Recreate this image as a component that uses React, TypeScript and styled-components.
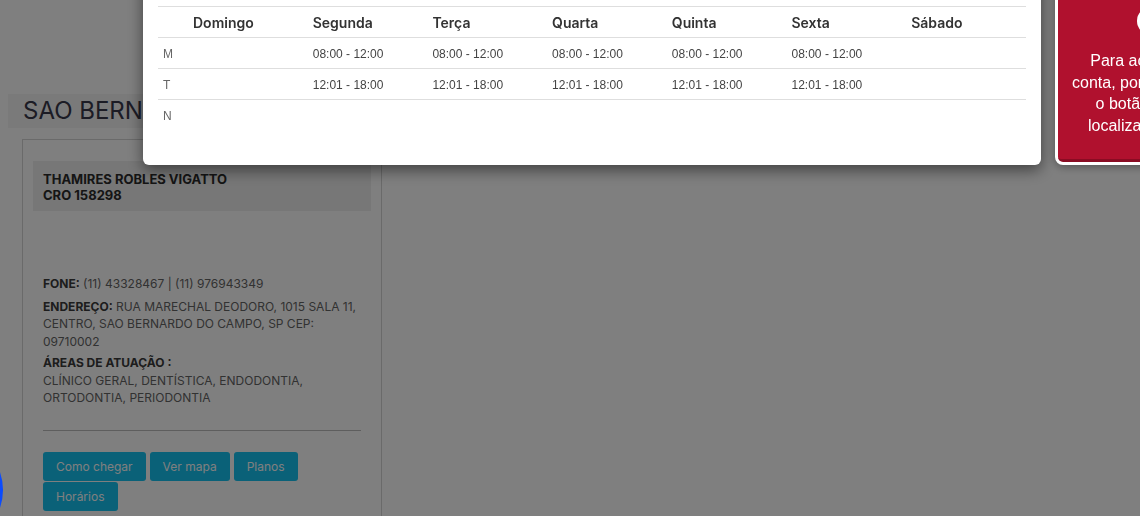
import React from 'react';
import styled, { createGlobalStyle } from 'styled-components';

const GlobalStyle = createGlobalStyle`
  html, body { margin: 0; padding: 0; background: #ffffff; }
  body {
    font-family: Inter, "Noto Sans", sans-serif;
    width: 1140px;
    height: 516px;
    overflow: hidden;
  }
  * { box-sizing: border-box; }
`;

const Page = styled.main`
  padding: 94px 0 0 8px;
`;

const Column = styled.section`
  width: 374px;
`;

const CityBar = styled.h2`
  margin: 0;
  height: 34px;
  padding: 0 15px;
  background: #f4f4f4;
  color: #38384a;
  font-size: 24px;
  font-weight: 400;
  line-height: 34px;
  white-space: nowrap;
  overflow: hidden;
`;

const Card = styled.article`
  margin: 11px 0 0 14px;
  width: 360px;
  height: 400px;
  padding: 21px 10px 0;
  border: 1px solid #d4d4d4;
  border-bottom: none;
`;

const NameBox = styled.div`
  background: #eeeeee;
  padding: 10px 10px 8px;
  color: #2a2a2a;
  font-size: 13px;
  font-weight: 700;
  line-height: 16px;
`;

const Info = styled.div`
  margin-top: 64px;
  padding: 0 10px;
  color: #646464;
  font-size: 12px;
  line-height: 17.5px;
`;

const Para = styled.p<{ $gap?: number }>`
  margin: 0 0 ${(p) => p.$gap ?? 5}px;
`;

const Label = styled.strong`
  color: #3a3a3a;
  font-weight: 700;
`;

const Rule = styled.hr`
  margin: 23px 10px 0;
  border: none;
  border-top: 1px solid #bcbcbc;
`;

const ButtonRow = styled.div`
  display: flex;
  flex-wrap: wrap;
  column-gap: 4px;
  row-gap: 1px;
  margin: 21px 10px 0;
  width: 260px;
`;

const ActionButton = styled.button`
  height: 29px;
  padding: 0 13px;
  border: none;
  border-radius: 3px;
  background: #14c2f0;
  color: #ffffff;
  font-family: Inter, "Noto Sans", sans-serif;
  font-size: 12px;
  cursor: pointer;
`;

const Overlay = styled.div`
  position: fixed;
  inset: 0;
  background: rgba(0, 0, 0, 0.5);
`;

const Modal = styled.div`
  position: fixed;
  left: 143px;
  top: -65px;
  width: 898px;
  background: #ffffff;
  border-radius: 6px;
  box-shadow: 0 5px 15px rgba(0, 0, 0, 0.5);
`;

const ModalHeader = styled.header`
  height: 56px;
  padding: 0 15px;
  display: flex;
  align-items: center;
  border-bottom: 1px solid #e5e5e5;
  font-size: 18px;
  color: #333;
`;

const ModalBody = styled.div`
  padding: 15px;
`;

const Table = styled.table`
  width: 100%;
  border-collapse: collapse;
  table-layout: fixed;
  margin-bottom: 19px;
`;

const Th = styled.th`
  height: 31px;
  padding: 0 5px;
  border-top: 1px solid #dedede;
  border-bottom: 1px solid #dedede;
  text-align: left;
  color: #333333;
  font-family: Inter, "Noto Sans", sans-serif;
  font-size: 14px;
  font-weight: 600;
`;

const Td = styled.td<{ $first?: boolean }>`
  height: 31px;
  padding: 1px 5px 0;
  border-top: 1px solid #dedede;
  color: ${(p) => (p.$first ? '#666666' : '#444444')};
  font-family: "Liberation Sans", Arial, sans-serif;
  font-size: 12px;
`;

const AlertPanel = styled.aside`
  position: fixed;
  left: 1055px;
  top: -20px;
  width: 195px;
  border: 3px solid #ffffff;
  border-radius: 8px;
  background: #ffffff;
  box-shadow: 0 2px 8px rgba(0, 0, 0, 0.35);
`;

const AlertInner = styled.div`
  background: #b0112e;
  border-bottom: 3px solid #8a0c23;
  border-radius: 5px;
  padding: 25px 12px 22px;
  display: flex;
  flex-direction: column;
  align-items: center;
  color: #ffffff;
  font-family: "Liberation Sans", Arial, sans-serif;
  font-size: 16px;
  line-height: 21.7px;
  text-align: center;
`;

const AlertIcon = styled.svg`
  width: 28px;
  height: 28px;
  margin: -1px 0 15px -4px;
`;

const AlertLine = styled.span`
  display: block;
  white-space: nowrap;
`;

const ChatBubble = styled.div`
  position: fixed;
  left: -109px;
  top: 434px;
  width: 112px;
  height: 112px;
  border-radius: 50%;
  background: #0a4bff;
`;

const days = ['Domingo', 'Segunda', 'Terça', 'Quarta', 'Quinta', 'Sexta', 'Sábado'];
const rows: { label: string; slots: string[] }[] = [
  { label: 'M', slots: ['', '08:00 - 12:00', '08:00 - 12:00', '08:00 - 12:00', '08:00 - 12:00', '08:00 - 12:00', ''] },
  { label: 'T', slots: ['', '12:01 - 18:00', '12:01 - 18:00', '12:01 - 18:00', '12:01 - 18:00', '12:01 - 18:00', ''] },
  { label: 'N', slots: ['', '', '', '', '', '', ''] },
];

export default function App() {
  return (
    <>
      <GlobalStyle />
      <Page>
        <Column>
          <CityBar>SAO BERNARDO DO CAMPO</CityBar>
          <Card>
            <NameBox>
              THAMIRES ROBLES VIGATTO
              <br />
              CRO 158298
            </NameBox>
            <Info>
              <Para $gap={5}>
                <Label>FONE:</Label> (11) 43328467 | (11) 976943349
              </Para>
              <Para $gap={4}>
                <Label>ENDEREÇO:</Label> RUA MARECHAL DEODORO, 1015 SALA 11, CENTRO, SAO BERNARDO DO CAMPO, SP CEP: 09710002
              </Para>
              <Para $gap={0}>
                <Label>ÁREAS DE ATUAÇÃO :</Label>
                <br />
                CLÍNICO GERAL, DENTÍSTICA, ENDODONTIA, ORTODONTIA, PERIODONTIA
              </Para>
            </Info>
            <Rule />
            <ButtonRow>
              <ActionButton>Como chegar</ActionButton>
              <ActionButton>Ver mapa</ActionButton>
              <ActionButton>Planos</ActionButton>
              <ActionButton>Horários</ActionButton>
            </ButtonRow>
          </Card>
        </Column>
      </Page>
      <Overlay />
      <Modal>
        <ModalHeader>Horários</ModalHeader>
        <ModalBody>
          <Table>
            <colgroup>
              <col style={{ width: 30 }} />
              {days.map((d) => (
                <col key={d} />
              ))}
            </colgroup>
            <thead>
              <tr>
                <Th />
                {days.map((d) => (
                  <Th key={d}>{d}</Th>
                ))}
              </tr>
            </thead>
            <tbody>
              {rows.map((r) => (
                <tr key={r.label}>
                  <Td $first>{r.label}</Td>
                  {r.slots.map((s, i) => (
                    <Td key={i}>{s}</Td>
                  ))}
                </tr>
              ))}
            </tbody>
          </Table>
        </ModalBody>
      </Modal>
      <AlertPanel>
        <AlertInner>
          <AlertIcon viewBox="0 0 28 28">
            <circle cx="14" cy="14" r="14" fill="#ffffff" />
            <rect x="12.5" y="6.5" width="3" height="10" rx="1.5" fill="#b0112e" />
            <circle cx="14" cy="20.5" r="1.9" fill="#b0112e" />
          </AlertIcon>
          <AlertLine>Para acessar sua</AlertLine>
          <AlertLine>conta, por favor, clique</AlertLine>
          <AlertLine>o botão de login</AlertLine>
          <AlertLine>localizado no topo</AlertLine>
        </AlertInner>
      </AlertPanel>
      <ChatBubble />
    </>
  );
}
